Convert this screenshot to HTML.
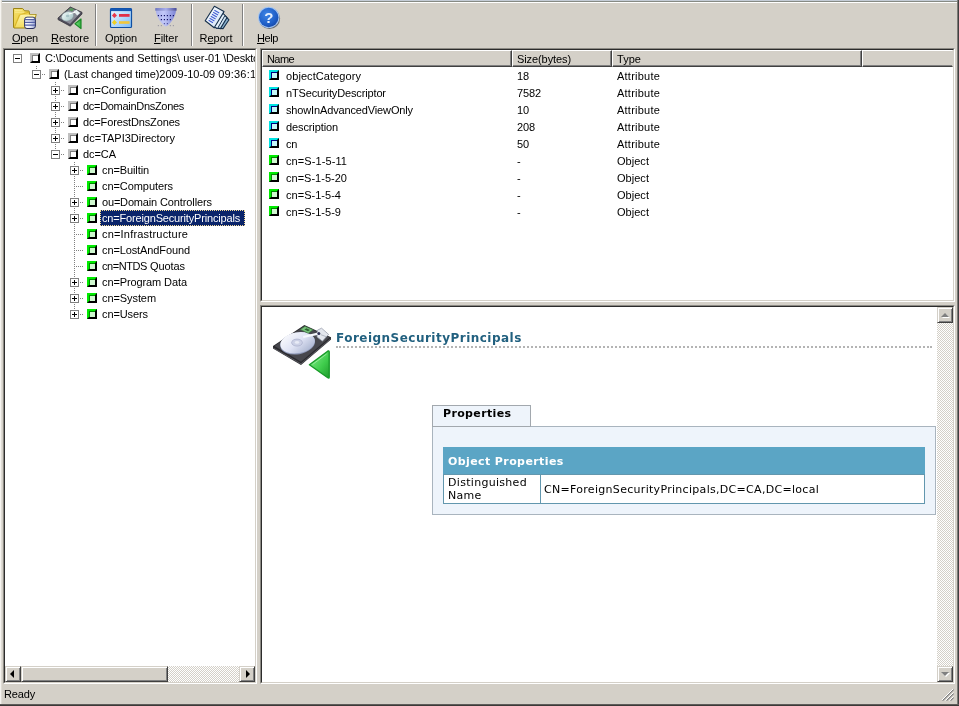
<!DOCTYPE html>
<html>
<head>
<meta charset="utf-8">
<title>Active Directory Backup Viewer</title>
<style>
*{box-sizing:border-box;margin:0;padding:0}
html,body{width:959px;height:706px;overflow:hidden}
body{background:#d4d0c8;font-family:"Liberation Sans",sans-serif;font-size:11px;color:#000;position:relative;line-height:13px}
#app{position:absolute;left:0;top:0;width:959px;height:706px;will-change:transform;background:#d4d0c8;overflow:hidden}
.abs{position:absolute}
.t{position:absolute;white-space:pre;height:13px;line-height:13px}
u{text-decoration:underline;text-underline-offset:1px;text-decoration-thickness:1px}
/* window chrome */
#top0{left:0;top:0;width:959px;height:1px;background:#c4ccd6}
#top1{left:2px;top:1px;width:955px;height:1px;background:#868a84}
#top2{left:0;top:2px;width:957px;height:1px;background:#fff}
#edgeL{left:0;top:0;width:2px;height:704px;background:#dfdcd5;border-left:1px solid #f6f4f0}
#edgeR{left:957px;top:0;width:2px;height:706px;background:#404040;border-left:1px solid #7c7a76}
#edgeB{left:0;top:704px;width:959px;height:2px;background:#3c3a38;border-top:1px solid #5e5c5a}
/* toolbar */
.sep{position:absolute;top:4px;width:2px;height:42px;border-left:1px solid #808080;border-right:1px solid #fff}
.tb{position:absolute;top:32px;height:13px;line-height:13px;white-space:pre}
/* panes (sunken edge) */
.pane{position:absolute;background:#fff;overflow:hidden;border-style:solid;border-width:1px;border-color:#8c8a84 #fff #fff #8c8a84}
.pane>.in{position:absolute;left:0;top:0;right:0;bottom:0;border-style:solid;border-width:1px;border-color:#2c2c2c #d4d0c8 #d4d0c8 #2c2c2c;overflow:hidden}
#tree{left:3px;top:48px;width:254px;height:636px}
#list{left:260px;top:48px;width:695px;height:254px}
#html{left:260px;top:305px;width:695px;height:379px}
/* tree */
.r{position:absolute;left:0;width:400px;height:16px}
.bx{position:absolute;top:4px;width:9px;height:9px;border:1px solid #808080;background:#fff}
.bx:before{content:"";position:absolute;left:1px;top:3px;width:5px;height:1px;background:#000}
.bx.p:after{content:"";position:absolute;left:3px;top:1px;width:1px;height:5px;background:#000}
.ic{position:absolute;top:3px;width:10px;height:10px;border-style:solid;border-width:2px;background:#fff}
.ic.g{border-color:#c0c0c0 #000 #000 #c0c0c0;box-shadow:inset 1px 1px 0 #808080}
.ic.n{border-color:#00ec00 #000 #000 #00ec00;box-shadow:inset 1px 1px 0 #008c00;background:#d0f8d0}
.ic.c{border-color:#00e4e4 #000 #000 #00e4e4;box-shadow:inset 1px 1px 0 #000080;background:#c4f8f8}
.lb{position:absolute;top:0;height:16px;line-height:16px;white-space:pre;padding:0 0 0 2px}
.lb.sel{background:#0a246a;color:#fff;outline:1px dotted #f5db95;outline-offset:-1px}
.vl{position:absolute;width:1px;background:repeating-linear-gradient(to bottom,#808080 0,#808080 1px,transparent 1px,transparent 2px)}
.hl{position:absolute;height:1px;background:repeating-linear-gradient(to right,#808080 0,#808080 1px,transparent 1px,transparent 2px)}
/* scrollbars */
.trk{position:absolute;background:repeating-conic-gradient(#fff 0 25%,#d4d0c8 0 50%) 0 0/2px 2px}
.btn{position:absolute;width:16px;height:16px;background:#d4d0c8;border-style:solid;border-width:1px;border-color:#d4d0c8 #404040 #404040 #d4d0c8;box-shadow:inset 1px 1px 0 #fff,inset -1px -1px 0 #808080}
.thumb{position:absolute;background:#d4d0c8;border-style:solid;border-width:1px;border-color:#d4d0c8 #404040 #404040 #d4d0c8;box-shadow:inset 1px 1px 0 #fff,inset -1px -1px 0 #808080}
.ar{position:absolute;width:0;height:0;border-style:solid}
/* list */
.hd{position:absolute;top:0;height:17px;background:#d4d0c8;border-style:solid;border-width:1px;border-color:#fff #404040 #404040 #fff;box-shadow:inset -1px -1px 0 #808080}
.hd span{position:absolute;left:4px;top:2px;height:13px;line-height:13px;white-space:pre}
.hd span span{position:static}
.lr{position:absolute;left:0;width:691px;height:17px}
.lr span{position:absolute;top:3px;height:13px;line-height:13px;white-space:pre}
.lr span span{position:static}
.lr .ic{left:7px;top:3px}
.c1{left:24px}.c2{left:255px}.c3{left:355px}
/* html pane */
#html .in{font-family:"DejaVu Sans","Liberation Sans",sans-serif}
#ttl{position:absolute;left:74px;top:21px;width:596px;height:20px;border-bottom:2px dotted #b4b4b4;font-weight:bold;font-size:12px;line-height:15px;color:#21607f;letter-spacing:.48px;white-space:pre;padding:3px 0 0 0}
#tab{position:absolute;left:170px;top:98px;width:99px;height:22px;background:#eef4fb;border:1px solid #a2a8ae;font-weight:bold;font-size:11px;line-height:13px;letter-spacing:.36px;padding:1px 0 0 10px;white-space:pre}
#pnl{position:absolute;left:170px;top:119px;width:504px;height:89px;background:#eef4fb;border:1px solid #a9b4be}
#oh{position:absolute;left:181px;top:140px;width:482px;height:28px;background:#5ba5c5;color:#fff;font-weight:bold;font-size:11px;line-height:13px;letter-spacing:.4px;padding:8px 0 0 5px;white-space:pre}
#c1,#c2{position:absolute;top:167px;height:30px;background:#fff;border:1px solid #6297ae;font-size:11px;line-height:13px}
#c1{left:181px;width:98px;padding:1px 0 0 4px;letter-spacing:.3px}
#c2{left:278px;width:385px;padding:8px 0 0 3px;letter-spacing:.3px;white-space:pre}
</style>
</head>
<body>
<div id="app">
<div id="top0" class="abs"></div>
<div id="top2" class="abs"></div>
<div id="top1" class="abs"></div>
<div id="edgeL" class="abs"></div>
<div id="edgeR" class="abs"></div>
<div id="edgeB" class="abs"></div>
<div id="toolbar">
<svg class="abs" style="left:0;top:0" width="300" height="48" viewBox="0 0 300 48">
<defs>
<linearGradient id="gFold" x1="0" y1="0" x2="1" y2="1"><stop offset="0" stop-color="#f6e06a"/><stop offset="1" stop-color="#e2bf2c"/></linearGradient>
<linearGradient id="gFlap" x1="0" y1="0" x2="0" y2="1"><stop offset="0" stop-color="#fdf3a8"/><stop offset="1" stop-color="#f3dc62"/></linearGradient>
<linearGradient id="gDb" x1="0" y1="0" x2="1" y2="0"><stop offset="0" stop-color="#fff"/><stop offset=".5" stop-color="#e4e8f6"/><stop offset="1" stop-color="#9aa6d4"/></linearGradient>
<linearGradient id="gWin" x1="0" y1="0" x2="1" y2="1"><stop offset="0" stop-color="#f4faff"/><stop offset="1" stop-color="#7cbcf8"/></linearGradient>
<linearGradient id="gFun" x1="0" y1="0" x2="1" y2="0"><stop offset="0" stop-color="#aab0ea"/><stop offset=".4" stop-color="#c2c8f8"/><stop offset="1" stop-color="#7c84d4"/></linearGradient>
<linearGradient id="gFunT" x1="0" y1="0" x2="1" y2="0"><stop offset="0" stop-color="#7078c0"/><stop offset=".5" stop-color="#a8aeec"/><stop offset="1" stop-color="#484c98"/></linearGradient>
<radialGradient id="gHelp" cx=".4" cy=".35" r=".7"><stop offset="0" stop-color="#3f86e6"/><stop offset=".7" stop-color="#1f5fc8"/><stop offset="1" stop-color="#1848a8"/></radialGradient>
<linearGradient id="gTri" x1="0" y1="0" x2="1" y2="0"><stop offset="0" stop-color="#7ae27e"/><stop offset="1" stop-color="#2fae3c"/></linearGradient>
<linearGradient id="gPlat" x1="0" y1="0" x2="1" y2="1"><stop offset="0" stop-color="#f4fbfb"/><stop offset=".6" stop-color="#c4dcdc"/><stop offset="1" stop-color="#9eb4bc"/></linearGradient>
<linearGradient id="gPap" x1="0" y1="0" x2="1" y2="1"><stop offset="0" stop-color="#fff"/><stop offset="1" stop-color="#cfe2f6"/></linearGradient>
</defs>
<!-- Open: folder + db -->
<g>
<path d="M13.5 8.5 L22.6 8.5 L24.6 10.8 L29 11 L29.6 14.5 L36.2 14.5 L32.6 28 L14 28 L13.5 27 Z" fill="url(#gFold)" stroke="#9c8416" stroke-width="1"/>
<path d="M14.6 27 L19.4 15.2 L29 12" stroke="#d9b62c" stroke-width="1.1" fill="none"/>
<path d="M20.6 14.8 L35.6 14.8 L32.3 27.3 L15.2 27.3 Z" fill="url(#gFlap)"/>
<path d="M14.8 10.3h7.6M14.8 12.2h9.4" stroke="#fbef9c" stroke-width=".8" fill="none"/>
<rect x="24.6" y="17.2" width="10.8" height="11.3" rx="2.4" fill="url(#gDb)" stroke="#2a3060" stroke-width="1"/>
<path d="M25 19.7h10M25 22.3h10M25 25.1h10" stroke="#5562a8" stroke-width="1.2"/>
<path d="M26.4 18.3h7.2" stroke="#fff" stroke-width="1"/>
</g>
<!-- Restore: hdd + green arrow -->
<g>
<path d="M58 18 L70.3 7 L82 12.3 L82 14 L70.3 26.2 L58 19.6 Z" fill="#4c4a58" stroke="#3a3840" stroke-width=".8"/>
<path d="M59.2 17.9 L70.4 8 L80.8 12.6 L70 24 Z" fill="#8a8a96"/>
<ellipse cx="67.6" cy="16.3" rx="6.2" ry="4.6" transform="rotate(-18 67.6 16.3)" fill="url(#gPlat)" stroke="#7a8c92" stroke-width=".5"/>
<ellipse cx="67.6" cy="16" rx="1.7" ry="1.2" fill="#a8c4c8"/>
<path d="M68.3 9.8 L71 7.8 L74.4 9.3 L72 11.6 Z" fill="#5a9460"/>
<path d="M73.5 11.2 L76.6 9.8 L80 13 L77.2 15.4 Z" fill="#e8eef0"/>
<path d="M69 14 L75 12.2" stroke="#fff" stroke-width="1.2"/>
<path d="M75 23.7 L81 19 L81 28.6 Z" fill="url(#gTri)" stroke="#1c8a28" stroke-width="1.2" stroke-linejoin="round"/>
</g>
<!-- Option -->
<g>
<rect x="110.5" y="8.5" width="21" height="19" rx="1" fill="url(#gWin)" stroke="#0f4fa2" stroke-width="1.2"/>
<rect x="110.5" y="8.5" width="21" height="2.6" fill="#1457b4"/>
<path d="M114.4 12.8 L117 15.4 L114.4 18 L111.9 15.4 Z" fill="#e8384c"/>
<rect x="119" y="14" width="10.6" height="2.8" fill="#e03048"/>
<path d="M114.4 19.8 L117 22.4 L114.4 25 L111.9 22.4 Z" fill="#f0d020"/>
<rect x="119" y="21.2" width="10.6" height="2.6" fill="#f2c63a"/>
</g>
<!-- Filter -->
<g>
<path d="M155.8 10.5 L176 10.5 C175.6 16 172 21.5 167.8 25.6 Q165.9 27.2 164 25.6 C159.8 21.5 156.2 16 155.8 10.5 Z" fill="url(#gFun)"/>
<rect x="155.2" y="8" width="21.4" height="2.8" rx=".6" fill="url(#gFunT)"/>
<g fill="#141464">
<rect x="157.8" y="15" width="1.2" height="1.2"/><rect x="160.8" y="15" width="1.2" height="1.2"/><rect x="163.8" y="15" width="1.2" height="1.2"/><rect x="166.8" y="15" width="1.2" height="1.2"/><rect x="169.8" y="15" width="1.2" height="1.2"/><rect x="172.8" y="15" width="1.2" height="1.2"/>
<rect x="160.8" y="19" width="1.2" height="1.2"/><rect x="163.8" y="19" width="1.2" height="1.2"/><rect x="166.8" y="19" width="1.2" height="1.2"/><rect x="169.8" y="19" width="1.2" height="1.2"/>
<rect x="163.8" y="23" width="1.2" height="1.2" opacity=".6"/><rect x="166.8" y="23" width="1.2" height="1.2" opacity=".6"/>
</g>
<g fill="#60607c" opacity=".45">
<rect x="157.8" y="25" width="1.2" height="1.2"/><rect x="160.8" y="25" width="1.2" height="1.2"/><rect x="169.8" y="25" width="1.2" height="1.2"/><rect x="172.8" y="25" width="1.2" height="1.2"/>
</g>
</g>
<!-- Report -->
<g stroke-linejoin="round">
<path d="M220 13.4 L225.4 16 L229 19.8 L223 28.6 L216.6 28.2 Z" fill="#8cb4d0" stroke="#16304c" stroke-width="1.1"/>
<path d="M218 11.6 L223 13.6 L227 17.6 L220.4 28.6 L214.6 27.4 Z" fill="#cfe4f4" stroke="#16304c" stroke-width="1.1"/>
<path d="M216 9.6 L221 11.8 L225 15.4 L217.6 28.4 L213 26.6 Z" fill="#e4f0fa" stroke="#16304c" stroke-width="1"/>
<path d="M214.4 6.2 L224 11.6 L214.2 27.8 L205.2 20.8 Z" fill="url(#gPap)" stroke="#16304c" stroke-width="1.1"/>
<path d="M214.4 10.2l4.8 2.8M213.2 12.2l4.8 2.8M212 14.2l4.8 2.8M210.8 16.2l4.8 2.8M209.6 18.2l4.8 2.8M208.6 20.2l4.4 2.6" stroke="#4460d4" stroke-width="1.1" fill="none"/>
</g>
<!-- Help -->
<g>
<circle cx="269.5" cy="18.4" r="10.6" fill="#6a6e74"/>
<circle cx="268.7" cy="17.4" r="10.7" fill="#a4c4ee"/>
<circle cx="268.7" cy="17.5" r="9.7" fill="url(#gHelp)"/>
<text x="268.8" y="23" text-anchor="middle" font-family="'Liberation Sans',sans-serif" font-weight="bold" font-size="15" fill="#e6f0ff">?</text>
</g>
</svg>

<span class="tb" style="left:12px;letter-spacing:-0.23px"><u>O</u>pen</span>
<span class="tb" style="left:51px;letter-spacing:-0.08px"><u>R</u>estore</span>
<span class="tb" style="left:105px;letter-spacing:-0.07px">Op<u>t</u>ion</span>
<span class="tb" style="left:154px;letter-spacing:-0.08px"><u>F</u>ilter</span>
<span class="tb" style="left:199.5px;letter-spacing:-0.01px">R<u>e</u>port</span>
<span class="tb" style="left:257px;letter-spacing:-0.41px"><u>H</u>elp</span>
<div class="sep" style="left:95px"></div>
<div class="sep" style="left:191px"></div>
<div class="sep" style="left:242px"></div>
</div>
<div id="tree" class="pane">
<div class="in">
<div class="vl" style="left:31px;top:16px;height:4px"></div>
<div class="vl" style="left:50px;top:32px;height:73px"></div>
<div class="vl" style="left:69px;top:112px;height:153px"></div>
<div class="r" style="top:0px"><i class="bx" style="left:8px"></i><i class="ic g" style="left:25px"></i><span class="lb" style="left:38px"><span style="letter-spacing:-0.14px">C:\Documents</span> <span style="letter-spacing:-0.12px">and</span> <span style="letter-spacing:0.02px">Settings\</span> <span style="letter-spacing:-0.04px">user-01</span> <span style="letter-spacing:-0.23px">\Deskt</span><span style="letter-spacing:-0.12px">o</span></span></div>
<div class="hl" style="left:37px;top:24px;width:4px"></div>
<div class="r" style="top:16px"><i class="bx" style="left:27px"></i><i class="ic g" style="left:44px"></i><span class="lb" style="left:57px"><span style="letter-spacing:-0.09px">(Last</span> <span style="letter-spacing:-0.17px">changed</span> <span style="letter-spacing:-0.05px">time)2009-10-09</span> <span style="letter-spacing:0.19px">09:36:1</span></span></div>
<div class="hl" style="left:56px;top:40px;width:4px"></div>
<div class="r" style="top:32px"><i class="bx p" style="left:46px"></i><i class="ic g" style="left:63px"></i><span class="lb" style="left:76px"><span style="letter-spacing:-0.03px">cn=Configuration</span></span></div>
<div class="hl" style="left:56px;top:56px;width:4px"></div>
<div class="r" style="top:48px"><i class="bx p" style="left:46px"></i><i class="ic g" style="left:63px"></i><span class="lb" style="left:76px"><span style="letter-spacing:-0.30px">dc=DomainDnsZones</span></span></div>
<div class="hl" style="left:56px;top:72px;width:4px"></div>
<div class="r" style="top:64px"><i class="bx p" style="left:46px"></i><i class="ic g" style="left:63px"></i><span class="lb" style="left:76px"><span style="letter-spacing:-0.14px">dc=ForestDnsZones</span></span></div>
<div class="hl" style="left:56px;top:88px;width:4px"></div>
<div class="r" style="top:80px"><i class="bx p" style="left:46px"></i><i class="ic g" style="left:63px"></i><span class="lb" style="left:76px"><span style="letter-spacing:0.01px">dc=TAPI3Directory</span></span></div>
<div class="hl" style="left:56px;top:104px;width:4px"></div>
<div class="r" style="top:96px"><i class="bx" style="left:46px"></i><i class="ic g" style="left:63px"></i><span class="lb" style="left:76px"><span style="letter-spacing:-0.07px">dc=CA</span></span></div>
<div class="hl" style="left:75px;top:120px;width:4px"></div>
<div class="r" style="top:112px"><i class="bx p" style="left:65px"></i><i class="ic n" style="left:82px"></i><span class="lb" style="left:95px"><span style="letter-spacing:-0.10px">cn=Builtin</span></span></div>
<div class="hl" style="left:71px;top:136px;width:8px"></div>
<div class="r" style="top:128px"><i class="ic n" style="left:82px"></i><span class="lb" style="left:95px"><span style="letter-spacing:-0.07px">cn=Computers</span></span></div>
<div class="hl" style="left:75px;top:152px;width:4px"></div>
<div class="r" style="top:144px"><i class="bx p" style="left:65px"></i><i class="ic n" style="left:82px"></i><span class="lb" style="left:95px"><span style="letter-spacing:-0.18px">ou=Domain</span> <span style="letter-spacing:-0.11px">Controllers</span></span></div>
<div class="hl" style="left:75px;top:168px;width:4px"></div>
<div class="r" style="top:160px"><i class="bx p" style="left:65px"></i><i class="ic n" style="left:82px"></i><span class="lb sel" style="left:95px;width:145px"><span style="letter-spacing:-0.17px">cn=ForeignSecurityPrincipals</span></span></div>
<div class="hl" style="left:71px;top:184px;width:8px"></div>
<div class="r" style="top:176px"><i class="ic n" style="left:82px"></i><span class="lb" style="left:95px"><span style="letter-spacing:0.19px">cn=Infrastructure</span></span></div>
<div class="hl" style="left:71px;top:200px;width:8px"></div>
<div class="r" style="top:192px"><i class="ic n" style="left:82px"></i><span class="lb" style="left:95px"><span style="letter-spacing:-0.11px">cn=LostAndFound</span></span></div>
<div class="hl" style="left:71px;top:216px;width:8px"></div>
<div class="r" style="top:208px"><i class="ic n" style="left:82px"></i><span class="lb" style="left:95px"><span style="letter-spacing:-0.43px">cn=NTDS</span> <span style="letter-spacing:-0.08px">Quotas</span></span></div>
<div class="hl" style="left:75px;top:232px;width:4px"></div>
<div class="r" style="top:224px"><i class="bx p" style="left:65px"></i><i class="ic n" style="left:82px"></i><span class="lb" style="left:95px"><span style="letter-spacing:-0.12px">cn=Program</span> <span style="letter-spacing:-0.06px">Data</span></span></div>
<div class="hl" style="left:75px;top:248px;width:4px"></div>
<div class="r" style="top:240px"><i class="bx p" style="left:65px"></i><i class="ic n" style="left:82px"></i><span class="lb" style="left:95px"><span style="letter-spacing:-0.08px">cn=System</span></span></div>
<div class="hl" style="left:75px;top:264px;width:4px"></div>
<div class="r" style="top:256px"><i class="bx p" style="left:65px"></i><i class="ic n" style="left:82px"></i><span class="lb" style="left:95px"><span style="letter-spacing:-0.10px">cn=Users</span></span></div>
<div class="trk" style="left:0;top:616px;width:250px;height:16px"></div>
<div class="btn" style="left:0;top:616px"><i class="ar" style="left:4px;top:3px;border-width:4px 4px 4px 0;border-color:transparent #000 transparent transparent"></i></div>
<div class="thumb" style="left:16px;top:616px;width:147px;height:16px"></div>
<div class="btn" style="left:234px;top:616px"><i class="ar" style="left:6px;top:3px;border-width:4px 0 4px 4px;border-color:transparent transparent transparent #000"></i></div>
</div>
</div>
<div id="list" class="pane">
<div class="in">
<div class="hd" style="left:0;width:250px"><span><span style="letter-spacing:-0.59px">Name</span></span></div>
<div class="hd" style="left:250px;width:100px"><span><span style="letter-spacing:-0.09px">Size(bytes)</span></span></div>
<div class="hd" style="left:350px;width:250px"><span><span style="letter-spacing:0.04px">Type</span></span></div>
<div class="hd" style="left:600px;width:91px;border-right-color:#d4d0c8;box-shadow:inset 0 -1px 0 #808080"></div>
<div class="lr" style="top:17px"><i class="ic c"></i><span class="c1"><span style="letter-spacing:0.07px">objectCategory</span></span><span class="c2"><span style="letter-spacing:-0.12px">18</span></span><span class="c3"><span style="letter-spacing:0.23px">Attribute</span></span></div>
<div class="lr" style="top:34px"><i class="ic c"></i><span class="c1"><span style="letter-spacing:-0.14px">nTSecurityDescriptor</span></span><span class="c2"><span style="letter-spacing:-0.12px">7582</span></span><span class="c3"><span style="letter-spacing:0.23px">Attribute</span></span></div>
<div class="lr" style="top:51px"><i class="ic c"></i><span class="c1"><span style="letter-spacing:-0.14px">showInAdvancedViewOnly</span></span><span class="c2"><span style="letter-spacing:-0.12px">10</span></span><span class="c3"><span style="letter-spacing:0.23px">Attribute</span></span></div>
<div class="lr" style="top:68px"><i class="ic c"></i><span class="c1"><span style="letter-spacing:-0.11px">description</span></span><span class="c2"><span style="letter-spacing:-0.12px">208</span></span><span class="c3"><span style="letter-spacing:0.23px">Attribute</span></span></div>
<div class="lr" style="top:85px"><i class="ic c"></i><span class="c1"><span style="letter-spacing:-0.31px">cn</span></span><span class="c2"><span style="letter-spacing:-0.12px">50</span></span><span class="c3"><span style="letter-spacing:0.23px">Attribute</span></span></div>
<div class="lr" style="top:102px"><i class="ic n"></i><span class="c1"><span style="letter-spacing:0.09px">cn=S-1-5-11</span></span><span class="c2"><span style="letter-spacing:0.33px">-</span></span><span class="c3"><span style="letter-spacing:0.03px">Object</span></span></div>
<div class="lr" style="top:119px"><i class="ic n"></i><span class="c1"><span style="letter-spacing:0.01px">cn=S-1-5-20</span></span><span class="c2"><span style="letter-spacing:0.33px">-</span></span><span class="c3"><span style="letter-spacing:0.03px">Object</span></span></div>
<div class="lr" style="top:136px"><i class="ic n"></i><span class="c1"><span style="letter-spacing:0.03px">cn=S-1-5-4</span></span><span class="c2"><span style="letter-spacing:0.33px">-</span></span><span class="c3"><span style="letter-spacing:0.03px">Object</span></span></div>
<div class="lr" style="top:153px"><i class="ic n"></i><span class="c1"><span style="letter-spacing:0.03px">cn=S-1-5-9</span></span><span class="c2"><span style="letter-spacing:0.33px">-</span></span><span class="c3"><span style="letter-spacing:0.03px">Object</span></span></div>
</div>
</div>
<div id="html" class="pane">
<div class="in">
<svg class="abs" style="left:8px;top:14px" width="64" height="62" viewBox="270 321 64 62">
<defs>
<linearGradient id="hPlat" x1="0" y1="0" x2="1" y2="1"><stop offset="0" stop-color="#ffffff"/><stop offset=".5" stop-color="#dfe3f4"/><stop offset="1" stop-color="#9ca8c6"/></linearGradient>
<linearGradient id="hTri" x1="0" y1="0" x2="1" y2="1"><stop offset="0" stop-color="#8cf090"/><stop offset=".6" stop-color="#3fcc4c"/><stop offset="1" stop-color="#1f9a2c"/></linearGradient>
</defs>
<path d="M273 346 L304.4 325 L331 337.2 L331 339.6 L301 365 L273 348.6 Z" fill="#2a2a2e"/>
<path d="M274.4 346 L304.5 326 L329.6 337.4 L301 361.8 Z" fill="#47474d"/>
<path d="M273.4 348 L301 363.8 L330.6 338.8" stroke="#6c6c74" stroke-width=".7" fill="none"/>
<ellipse cx="297.6" cy="343.4" rx="17.6" ry="10.9" transform="rotate(-10 297.6 343.4)" fill="#8e98b8"/>
<ellipse cx="297.6" cy="342.8" rx="17.4" ry="10.4" transform="rotate(-10 297.6 342.8)" fill="url(#hPlat)"/>
<ellipse cx="297" cy="342.6" rx="5.4" ry="3.5" fill="#ccd1e6" stroke="#a8aeca" stroke-width=".7"/>
<ellipse cx="297" cy="342.4" rx="2.2" ry="1.4" fill="#e8ebf6"/>
<path d="M300.4 329.4 L305 326.4 L313 329.8 L308.2 333.2 Z" fill="#78c47c" stroke="#3c7c40" stroke-width=".6"/>
<path d="M304.4 329.6 L306.4 328.3 L310 329.9 L308 331.3 Z" fill="#2e6232"/>
<path d="M317.4 330.2 L321.6 328.2 L328.6 334.4 L322.4 341.2 L317 337 Z" fill="#e4e7ee" stroke="#8e94a2" stroke-width=".7"/>
<path d="M320.6 334.6 L326 336.6" stroke="#a6acb8" stroke-width=".8"/>
<path d="M303.2 337 L318.2 333.6" stroke="#f6f8fc" stroke-width="2.2"/>
<circle cx="318.8" cy="333.6" r="1.5" fill="#2c2c50"/>
<path d="M309.4 364.8 L328 351 Q329.2 350.4 329.2 352 L329.2 377 Q329.2 378.8 327.8 377.8 Z" fill="url(#hTri)" stroke="#189a28" stroke-width="1.4" stroke-linejoin="round"/>
<path d="M312.6 364.4 L326.6 354" stroke="#b4f6b8" stroke-width=".9" fill="none" opacity=".7"/>
</svg>

<div id="ttl">ForeignSecurityPrincipals</div>
<div id="pnl"></div>
<div id="tab">Properties</div>
<div id="oh">Object Properties</div>
<div id="c1">Distinguished<br>Name</div>
<div id="c2">CN=ForeignSecurityPrincipals,DC=CA,DC=local</div>
<div class="trk" style="left:675px;top:0;width:16px;height:375px"></div>
<div class="btn" style="left:675px;top:0"><i class="ar" style="left:4px;top:6px;border-width:0 4px 4px 4px;border-color:transparent transparent #fff transparent"></i><i class="ar" style="left:3px;top:5px;border-width:0 4px 4px 4px;border-color:transparent transparent #808080 transparent"></i></div>
<div class="btn" style="left:675px;top:359px"><i class="ar" style="left:4px;top:6px;border-width:4px 4px 0 4px;border-color:#fff transparent transparent transparent"></i><i class="ar" style="left:3px;top:5px;border-width:4px 4px 0 4px;border-color:#808080 transparent transparent transparent"></i></div>
</div>
</div>
<span class="t" style="left:4px;top:688px"><span style="letter-spacing:-0.16px">Ready</span></span>
<svg class="abs" style="left:942px;top:689px" width="13" height="13" viewBox="1 1 13 13"><path d="M12.5 1.5L1.5 12.5M12.5 5.5L5.5 12.5M12.5 9.5L9.5 12.5" stroke="#808080" stroke-width="1.4"/><path d="M12.5 .5L.5 12.5M12.5 4.5L4.5 12.5M12.5 8.5L8.5 12.5" stroke="#fff" stroke-width="1"/></svg>
</div>
</body>
</html>
